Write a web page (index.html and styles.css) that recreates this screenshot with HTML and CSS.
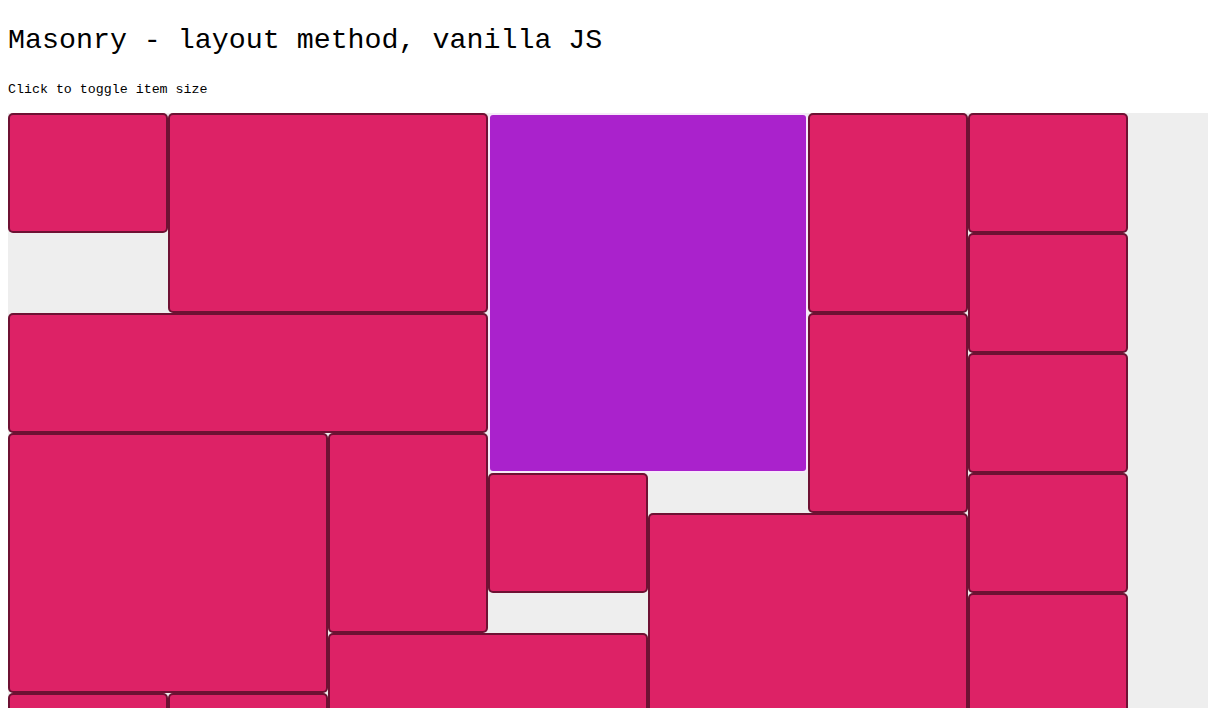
FILE: index.html
```html
<!DOCTYPE html>
<html lang="en">
<head>
    <meta charset="UTF-8">
    <meta name="viewport" content="width=device-width, initial-scale=1.0">
    <title>Masonry - layout method, vanilla JS</title>
    <link rel="stylesheet" href="styles.css">
</head>
<body>
    <h1>Masonry - layout method, vanilla JS</h1>
    <p class="hint">Click to toggle item size</p>

    <div class="grid" id="grid">
        <div class="grid-item" data-pos="0,0,1,6"></div>
        <div class="grid-item" data-pos="1,0,2,10"></div>
        <div class="grid-item is-expanded" data-pos="3,0,2,18"></div>
        <div class="grid-item" data-pos="5,0,1,10"></div>
        <div class="grid-item" data-pos="6,0,1,6"></div>
        <div class="grid-item" data-pos="6,6,1,6"></div>
        <div class="grid-item" data-pos="0,10,3,6"></div>
        <div class="grid-item" data-pos="5,10,1,10"></div>
        <div class="grid-item" data-pos="6,12,1,6"></div>
        <div class="grid-item" data-pos="0,16,2,13"></div>
        <div class="grid-item" data-pos="2,16,1,10"></div>
        <div class="grid-item" data-pos="3,18,1,6"></div>
        <div class="grid-item" data-pos="6,18,1,6"></div>
        <div class="grid-item" data-pos="4,20,2,13"></div>
        <div class="grid-item" data-pos="6,24,1,10"></div>
        <div class="grid-item" data-pos="2,26,2,10"></div>
        <div class="grid-item" data-pos="0,29,1,6"></div>
        <div class="grid-item" data-pos="1,29,1,6"></div>
    </div>

    <script>
        // place items on the 160px x 20px grid
        document.querySelectorAll('.grid-item').forEach(function(item) {
            const pos = item.dataset.pos.split(',').map(Number);
            item.style.gridColumn = (pos[0] + 1) + ' / span ' + pos[2];
            item.style.gridRow = (pos[1] + 1) + ' / span ' + pos[3];
        });

        document.getElementById('grid').addEventListener('click', function(event) {
            if (event.target.classList.contains('grid-item')) {
                event.target.classList.toggle('is-expanded');
            }
        });
    </script>
</body>
</html>
```

FILE: styles.css
```css
* {
    box-sizing: border-box;
}
body {
    margin: 0;
    padding: 8px 0 8px 8px;
    font-family: "Liberation Mono", "DejaVu Sans Mono", monospace;
    color: #000;
    background: #fff;
    overflow-x: hidden;
}
h1 {
    font-size: 28.3px;
    font-weight: normal;
    line-height: 34px;
    margin: 15px 0 25px;
}
.hint {
    font-size: 13.3px;
    line-height: 16px;
    margin: 0 0 15px;
}
.grid {
    display: grid;
    grid-template-columns: repeat(7, 160px);
    grid-auto-rows: 20px;
    width: 1200px;
    background: #eee;
}
.grid-item {
    background: #dd2266;
    border: 2px solid hsla(0, 0%, 0%, 0.5);
    border-radius: 5px;
    cursor: pointer;
}
.grid-item:hover {
    border-color: hsla(0, 0%, 100%, 0.5);
}
.grid-item.is-expanded {
    background: #aa22cc;
    border-color: hsla(0, 0%, 100%, 0.9);
}
```
